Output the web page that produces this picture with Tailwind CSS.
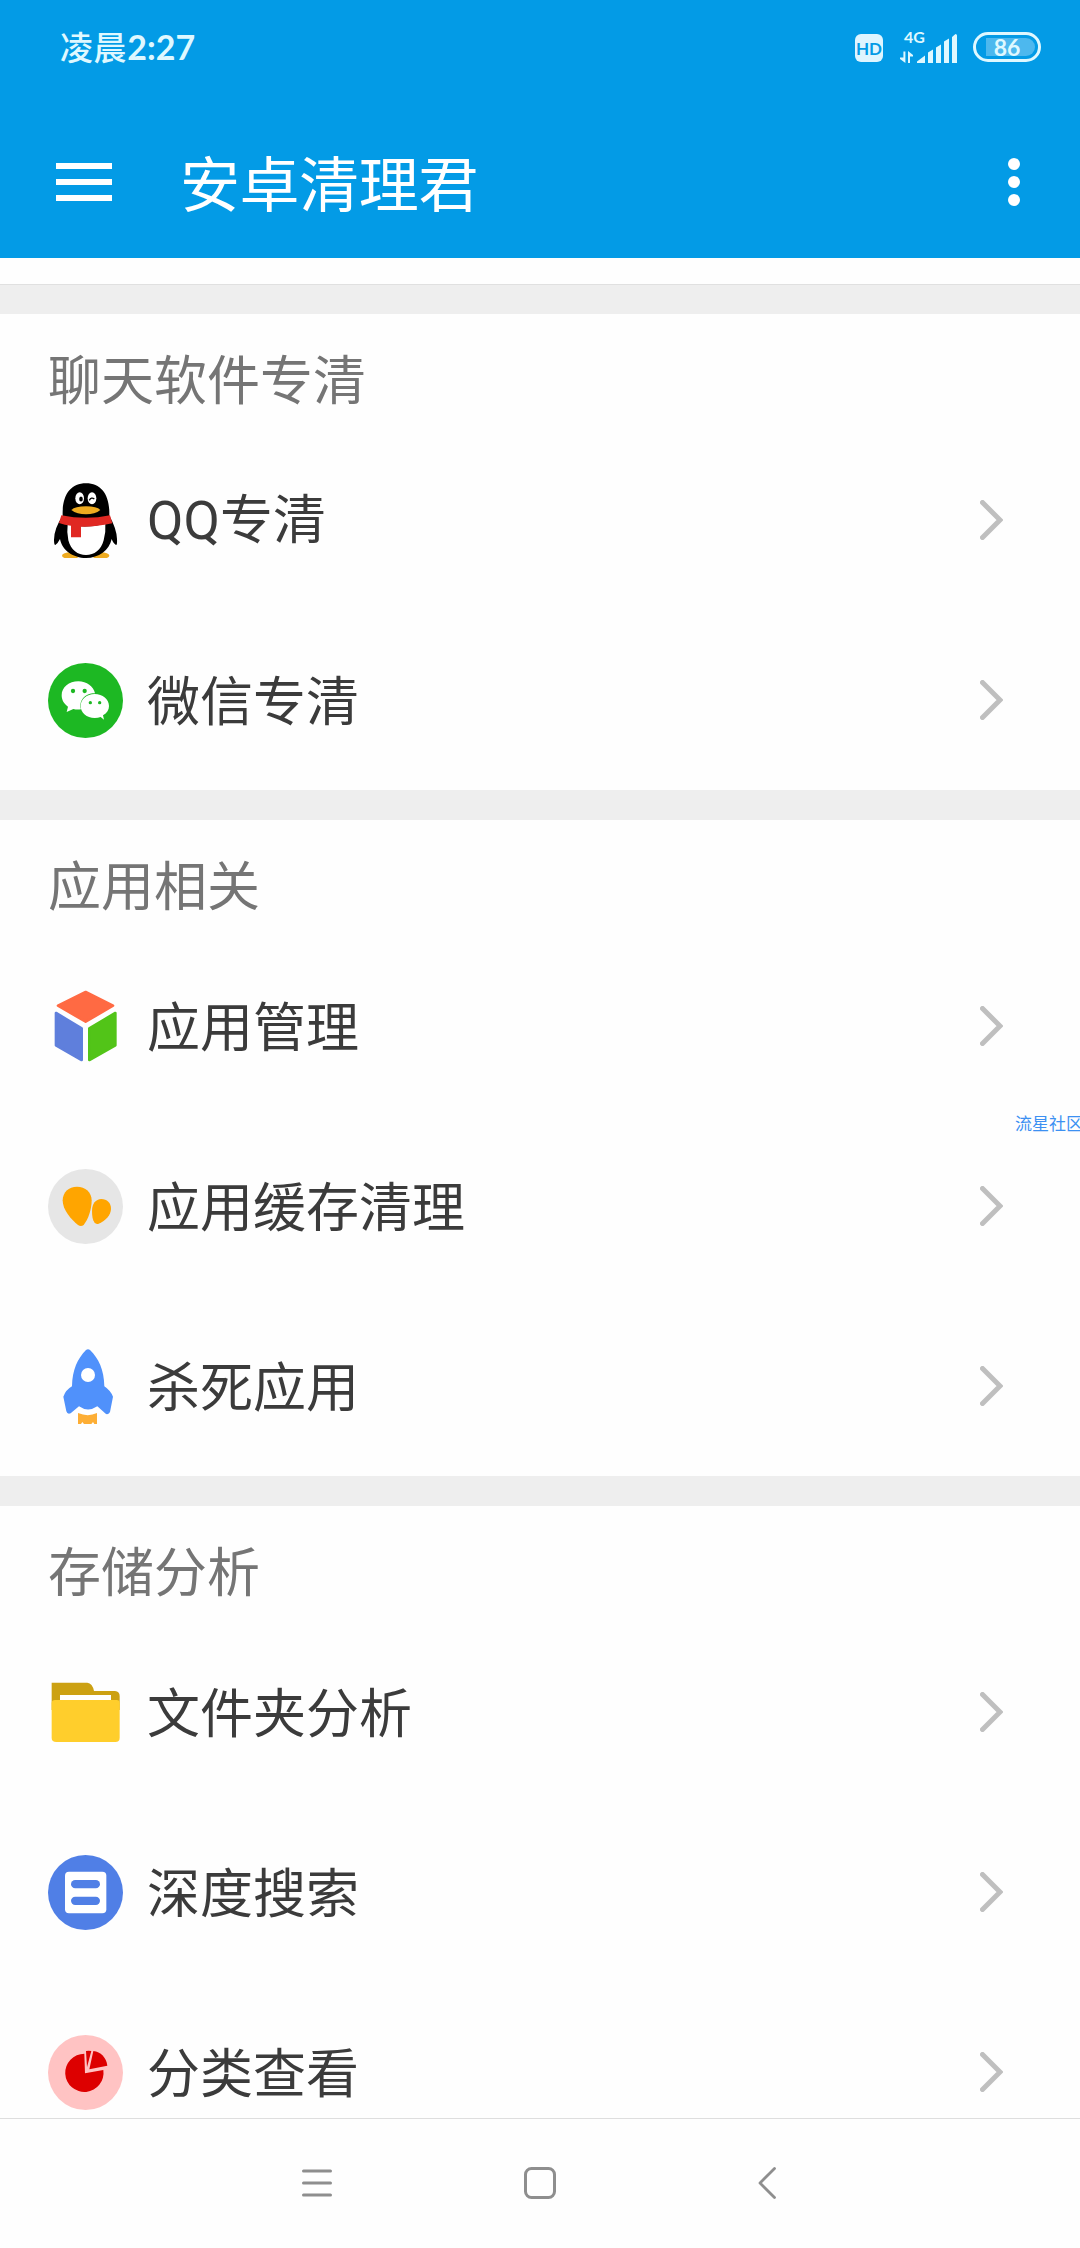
<!DOCTYPE html>
<html lang="zh-CN">
<head>
    <meta charset="UTF-8">
    <meta name="viewport" content="width=device-width, initial-scale=1.0">
    <title>安卓清理君</title>
    <script src="https://cdn.jsdelivr.net/npm/@tailwindcss/browser@4"></script>
</head>
<body class="bg-white font-['Noto_Sans_CJK_SC',sans-serif]">
    <div class="relative w-[1080px] h-[2248px] flex flex-col overflow-hidden bg-[#fefefe]">

        <!-- Header -->
        <header class="h-[258px] shrink-0 bg-[#039be6] text-white">
            <div class="h-24 pl-[60px] pr-[39px] flex items-center text-[#dff8ff]">
                <span class="pb-[3px] text-[33px] leading-none font-medium tracking-[0.6px]">凌晨<span class="font-['Lato',sans-serif] text-[34px] font-bold tracking-normal">2:27</span></span>
                <div class="ml-auto w-7 h-7 rounded-md bg-[#dff5ff] text-[#039be6] flex items-center justify-center font-['Lato',sans-serif] text-[17px] font-bold leading-none">HD</div>
                <svg class="ml-[17px] w-[58px] h-9 mb-0.5" viewBox="0 -3 58 36" fill="#dff8ff">
                    <text x="4" y="11" font-family="Lato, sans-serif" font-size="16" font-weight="700">4G</text>
                    <path d="M3.4 19.500h2V31L0 27v-1.500h3.400zM8 31V19l5 4v1.500h-3V31z"/>
                    <path d="M17 31v-1.500l8-6V31zM28 31V20.500l5-3V31zM36 31V15.500l5-3V31zM44 31V9.500l5-3V31zM52 31V5l3.500-3q1.500 0 1.500 1.500V31z"/>
                </svg>
                <div class="ml-[15px] w-[68px] h-[30px] mb-0.5 rounded-full border-3 border-[#dff8ff] p-[3px] pl-[10px] flex">
                    <div class="w-[49px] h-[18px] rounded-r-full bg-[#4db8ee] flex items-center justify-center pr-[7px] font-['Lato',sans-serif] text-[23px] font-bold leading-none">86</div>
                </div>
            </div>
            <div class="h-[162px] pt-[10px] pl-14 pr-[60px] flex items-center">
                <svg class="w-14 h-[38px]" viewBox="0 0 56 38" fill="#fff">
                    <path d="M0 0h56v6H0zM0 16h56v6H0zM0 32h56v6H0z"/>
                </svg>
                <h1 class="ml-[68px] pb-[3px] text-[60px] leading-none tracking-[-0.4px]">安卓清理君</h1>
                <svg class="ml-auto w-3 h-12" viewBox="0 0 12 48" fill="#fff">
                    <circle cx="6" cy="6" r="6"/><circle cx="6" cy="24" r="6"/><circle cx="6" cy="42" r="6"/>
                </svg>
            </div>
        </header>

        <!-- List -->
        <main class="h-[1860px] shrink-0 overflow-hidden text-[53px] text-[#3b3b3b]">
            <div class="h-[26px]"></div>
            <div class="h-[30px] bg-[#eeeeee] border-t border-[#e0e0e0]"></div>

            <section>
                <h2 class="h-[116px] pt-[11px] pl-12 flex items-center text-[#757575] leading-none">聊天软件专清</h2>
                <div class="h-[180px] pl-12 pr-[77px] flex items-center">
                    <svg class="w-[75px] h-[75px]" viewBox="54 68 225 225">
                        <ellipse cx="122" cy="286" rx="26" ry="10" fill="#eeab20"/>
                        <ellipse cx="212" cy="286" rx="26" ry="10" fill="#eeab20"/>
                        <path d="M98 166Q72 205 72 238Q72 254 76 254Q83 250 90 236C96 270 130 293 168 293S238 270 245 236Q250 250 258 254Q262 254 261 236Q260 205 238 166C240 105 215 69 168 69S96 105 98 166z" fill="#000"/>
                        <path d="M113 192Q168 206 226 190Q228 214 221 240C213 270 193 284 168 284S123 270 115 240Q110 214 113 192z" fill="#fff"/>
                        <path d="M94 165Q168 180 240 165L247 189Q190 201 153 199V231H123V196Q104 194 87 188z" fill="#e02822"/>
                        <path d="M124 149Q135 138 168 138T211 149Q195 162 168 162T124 149z" fill="#eeab20"/>
                        <ellipse cx="149" cy="114" rx="13" ry="18" fill="#fff"/>
                        <ellipse cx="186" cy="114" rx="13" ry="18" fill="#fff"/>
                        <ellipse cx="153" cy="116" rx="5.500" ry="7.500" fill="#000"/>
                        <path d="M178 120Q184 109 193 116" fill="none" stroke="#000" stroke-width="4"/>
                    </svg>
                    <span class="ml-6 pb-[3px] leading-none"><span class="font-['Roboto',sans-serif]">QQ</span>专清</span>
                    <svg class="ml-auto w-[23px] h-10" viewBox="0 0 23 40" fill="none" stroke="#bfbfbf" stroke-width="5" stroke-linecap="round"><path d="M2.500 2.500L20 20L2.500 37.500"/></svg>
                </div>
                <div class="h-[180px] pl-12 pr-[77px] flex items-center">
                    <svg class="w-[75px] h-[75px]" viewBox="54 608 225 225">
                        <circle cx="166.500" cy="720.500" r="112.500" fill="#1db823"/>
                        <path d="M145 663C117 663 95 681 95 705C95 719 102 731 114 739L110 755L130 746Q141 749 153 747C145 721 166 698 195 699C191 678 170 663 145 663z" fill="#fff"/>
                        <path d="M194 701C170 701 152 717 152 737S170 773 194 773Q204 773 212 770L222 778L219 765C231 758 237 748 237 737C237 717 218 701 194 701z" fill="#fff"/>
                        <g fill="#1db823">
                            <circle cx="129" cy="692" r="6.500"/><circle cx="164" cy="692" r="6.500"/>
                            <circle cx="181" cy="727" r="5"/><circle cx="209" cy="727" r="5"/>
                        </g>
                    </svg>
                    <span class="ml-6 pb-[3px] leading-none">微信专清</span>
                    <svg class="ml-auto w-[23px] h-10" viewBox="0 0 23 40" fill="none" stroke="#bfbfbf" stroke-width="5" stroke-linecap="round"><path d="M2.500 2.500L20 20L2.500 37.500"/></svg>
                </div>
            </section>
            <div class="h-[30px] bg-[#eeeeee]"></div>

            <section>
                <h2 class="h-[116px] pt-[11px] pl-12 flex items-center text-[#757575] leading-none">应用相关</h2>
                <div class="h-[180px] pl-12 pr-[77px] flex items-center">
                    <svg class="w-[75px] h-[75px]" viewBox="54 87 225 225" stroke-width="8" stroke-linejoin="round">
                        <path d="M167 96L249 137L167 185L84 137z" fill="#ff6a43" stroke="#ff6a43"/>
                        <path d="M78 159L155 205V300L78 256z" fill="#5f7fdc" stroke="#5f7fdc"/>
                        <path d="M256 159L178 205V300L256 256z" fill="#52c418" stroke="#52c418"/>
                    </svg>
                    <span class="ml-6 pb-[3px] leading-none">应用管理</span>
                    <svg class="ml-auto w-[23px] h-10" viewBox="0 0 23 40" fill="none" stroke="#bfbfbf" stroke-width="5" stroke-linecap="round"><path d="M2.500 2.500L20 20L2.500 37.500"/></svg>
                </div>
                <div class="h-[180px] pl-12 pr-[77px] flex items-center">
                    <svg class="w-[75px] h-[75px]" viewBox="54 627 225 225">
                        <circle cx="166.500" cy="739.500" r="112.500" fill="#e6e6e6"/>
                        <path d="M141 680C116 680 98 697 98 721C98 750 123 778 144 795Q153 801 161 795C175 778 185 748 185 721C185 697 166 680 141 680z" fill="#ffa500"/>
                        <path d="M214 717C197 717 186 732 186 752C186 768 188 780 193 787Q198 794 206 791C227 782 243 765 243 746C243 729 231 717 214 717z" fill="#ffa500"/>
                    </svg>
                    <span class="ml-6 pb-[3px] leading-none">应用缓存清理</span>
                    <svg class="ml-auto w-[23px] h-10" viewBox="0 0 23 40" fill="none" stroke="#bfbfbf" stroke-width="5" stroke-linecap="round"><path d="M2.500 2.500L20 20L2.500 37.500"/></svg>
                </div>
                <div class="h-[180px] pl-12 pr-[77px] flex items-center">
                    <svg class="w-[75px] h-[75px]" viewBox="54 147 225 225">
                        <path d="M168 150Q174 145 180 150C206 176 222 208 223 259Q241 271 249 290L240 336Q237 344 228 342L202 319Q174 338 147 319L122 340Q112 344 109 334L100 290Q107 270 126 259C127 208 143 176 168 150z" fill="#5091fb"/>
                        <circle cx="174" cy="225" r="21" fill="#fff"/>
                        <path d="M144 339Q174 352 201 339V372H193L189 366L184 372H162L157 366L153 372H144z" fill="#fdae35"/>
                    </svg>
                    <span class="ml-6 pb-[3px] leading-none">杀死应用</span>
                    <svg class="ml-auto w-[23px] h-10" viewBox="0 0 23 40" fill="none" stroke="#bfbfbf" stroke-width="5" stroke-linecap="round"><path d="M2.500 2.500L20 20L2.500 37.500"/></svg>
                </div>
            </section>
            <div class="h-[30px] bg-[#eeeeee]"></div>

            <section>
                <h2 class="h-[116px] pt-[11px] pl-12 flex items-center text-[#757575] leading-none">存储分析</h2>
                <div class="h-[180px] pl-12 pr-[77px] flex items-center">
                    <svg class="w-[75px] h-[75px]" viewBox="54 105 225 225">
                        <path d="M65 128H172Q187 129 192 153H255Q269 154 269 168V210H65z" fill="#cca113"/>
                        <path d="M90 165H243V190H90z" fill="#fff"/>
                        <path d="M75 180H260Q269 180 269 188V293Q269 306 256 306H79Q65 306 65 293V190Q65 180 75 180z" fill="#ffce2c"/>
                    </svg>
                    <span class="ml-6 pb-[3px] leading-none">文件夹分析</span>
                    <svg class="ml-auto w-[23px] h-10" viewBox="0 0 23 40" fill="none" stroke="#bfbfbf" stroke-width="5" stroke-linecap="round"><path d="M2.500 2.500L20 20L2.500 37.500"/></svg>
                </div>
                <div class="h-[180px] pl-12 pr-[77px] flex items-center">
                    <svg class="w-[75px] h-[75px]" viewBox="54 645 225 225">
                        <circle cx="166.500" cy="757.500" r="112.500" fill="#507fe6"/>
                        <rect x="105" y="695" width="124" height="125" rx="12" fill="#fff"/>
                        <rect x="123" y="720" width="87" height="25" rx="12.500" fill="#507fe6"/>
                        <rect x="123" y="770" width="87" height="25" rx="12.500" fill="#507fe6"/>
                    </svg>
                    <span class="ml-6 pb-[3px] leading-none">深度搜索</span>
                    <svg class="ml-auto w-[23px] h-10" viewBox="0 0 23 40" fill="none" stroke="#bfbfbf" stroke-width="5" stroke-linecap="round"><path d="M2.500 2.500L20 20L2.500 37.500"/></svg>
                </div>
                <div class="h-[180px] pl-12 pr-[77px] flex items-center">
                    <svg class="w-[75px] h-[75px]" viewBox="54 165 225 225">
                        <circle cx="166.500" cy="277.500" r="112.500" fill="#ffc3c3"/>
                        <g fill="#dd0000">
                            <path d="M163 221A57.500 57.500 0 1 0 220 270L165 280z"/>
                            <path d="M168 213Q176 211 184 213L171 262z"/>
                            <path d="M190 213C212 215 229 233 232 257L178 268z"/>
                        </g>
                    </svg>
                    <span class="ml-6 pb-[3px] leading-none">分类查看</span>
                    <svg class="ml-auto w-[23px] h-10" viewBox="0 0 23 40" fill="none" stroke="#bfbfbf" stroke-width="5" stroke-linecap="round"><path d="M2.500 2.500L20 20L2.500 37.500"/></svg>
                </div>
            </section>
        </main>

        <!-- System navigation -->
        <nav class="h-[130px] shrink-0 border-t border-[#dedede] pl-[302px] pb-[1px] flex items-center">
            <svg class="w-[30px] h-8" viewBox="0 0 30 32" stroke="#8e8e8e" stroke-width="3" stroke-linecap="round"><path d="M1.500 4h27M1.500 16h27M1.500 28h27"/></svg>
            <svg class="ml-[192px] w-8 h-8" viewBox="0 0 32 32" fill="none" stroke="#8e8e8e" stroke-width="3"><rect x="1.500" y="1.500" width="29" height="29" rx="6"/></svg>
            <svg class="ml-[202px] w-[18px] h-8" viewBox="0 0 18 32" fill="none" stroke="#8e8e8e" stroke-width="2.800" stroke-linecap="round" stroke-linejoin="round"><path d="M16.500 1.500L2 16L16.500 30.500"/></svg>
        </nav>

        <!-- Floating mark at the right edge -->
        <div class="absolute top-[1114px] left-[1015px] w-[65px] overflow-hidden whitespace-nowrap text-[17px] leading-[18px] text-[#3c90f2]">流星社区</div>
    </div>
</body>
</html>
